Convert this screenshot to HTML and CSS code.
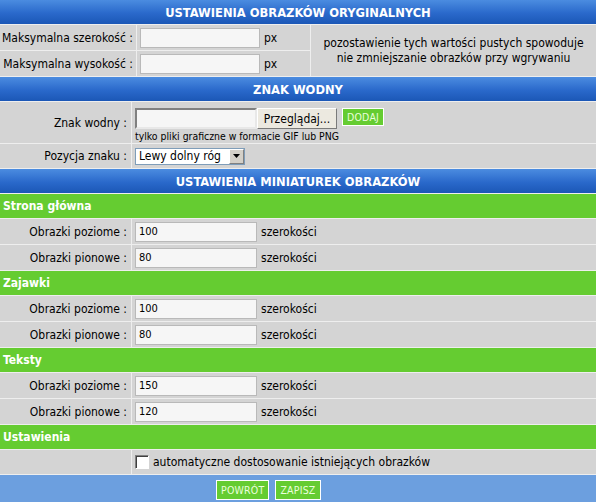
FILE: index.html
```html
<!DOCTYPE html>
<html lang="pl">
<head>
<meta charset="utf-8">
<title>Ustawienia obrazków</title>
<link rel="stylesheet" href="styles.css">
</head>
<body>
<div class="panel">
  <div class="head">USTAWIENIA OBRAZKÓW ORYGINALNYCH</div>
  <div class="orig">
    <div class="lbl">Maksymalna szerokość :</div>
    <div class="fld"><span class="txt"></span><span class="unit">px</span></div>
    <div class="note">pozostawienie tych wartości pustych spowoduje<br>nie zmniejszanie obrazków przy wgrywaniu</div>
    <div class="lbl">Maksymalna wysokość :</div>
    <div class="fld"><span class="txt"></span><span class="unit">px</span></div>
  </div>

  <div class="head">ZNAK WODNY</div>
  <div class="grid wm">
    <div class="lbl">Znak wodny :</div>
    <div class="fld col">
      <div class="filebox">
        <span class="file"></span><span class="browse">Przeglądaj...</span><span class="gbtn add">DODAJ</span>
      </div>
      <div class="hint">tylko pliki graficzne w formacie GIF lub PNG</div>
    </div>
    <div class="lbl">Pozycja znaku :</div>
    <div class="fld">
      <span class="select"><span class="sel-val">Lewy dolny róg</span><span class="sel-arrow"><svg width="7" height="4" viewBox="0 0 7 4"><path d="M0 0h7L3.5 4z" fill="#000"/></svg></span></span>
    </div>
  </div>

  <div class="head">USTAWIENIA MINIATUREK OBRAZKÓW</div>
  <div class="group">Strona główna</div>
  <div class="grid">
    <div class="lbl">Obrazki poziome :</div>
    <div class="fld"><span class="txt wide">100</span><span class="unit">szerokości</span></div>
    <div class="lbl">Obrazki pionowe :</div>
    <div class="fld"><span class="txt wide">80</span><span class="unit">szerokości</span></div>
  </div>
  <div class="group">Zajawki</div>
  <div class="grid">
    <div class="lbl">Obrazki poziome :</div>
    <div class="fld"><span class="txt wide">100</span><span class="unit">szerokości</span></div>
    <div class="lbl">Obrazki pionowe :</div>
    <div class="fld"><span class="txt wide">80</span><span class="unit">szerokości</span></div>
  </div>
  <div class="group">Teksty</div>
  <div class="grid">
    <div class="lbl">Obrazki poziome :</div>
    <div class="fld"><span class="txt wide">150</span><span class="unit">szerokości</span></div>
    <div class="lbl">Obrazki pionowe :</div>
    <div class="fld"><span class="txt wide">120</span><span class="unit">szerokości</span></div>
  </div>
  <div class="group">Ustawienia</div>
  <div class="grid last">
    <div class="lbl"></div>
    <div class="fld"><span class="check"></span><span class="chk-text">automatyczne dostosowanie istniejących obrazków</span></div>
  </div>
  <div class="foot">
    <span class="gbtn">POWRÓT</span><span class="gbtn">ZAPISZ</span>
  </div>
</div>
</body>
</html>
```

FILE: styles.css
```css
html, body {
  margin: 0;
  padding: 0;
  background: #ffffff;
}
body {
  font-family: "DejaVu Sans Condensed", "DejaVu Sans", sans-serif;
  font-size: 12px;
  color: #000;
}
.panel {
  width: 596px;
  display: flex;
  flex-direction: column;
  gap: 1px;
  background: #eeeeee;
}
.head {
  height: 24px;
  line-height: 25px;
  text-align: center;
  color: #fff;
  font-weight: bold;
  font-size: 12.8px;
  background: linear-gradient(#4b8ce0, #2a69cb 55%, #1b57b6);
}
.group {
  height: 24px;
  line-height: 24px;
  padding-left: 3px;
  color: #fff;
  font-weight: bold;
  font-size: 12px;
  background: #65cc31;
}
.orig {
  display: grid;
  grid-template-columns: 136px 173px 1fr;
  grid-template-rows: 25px 25px;
  gap: 1px;
}
.orig .note {
  grid-column: 3;
  grid-row: 1 / span 2;
  background: #d4d4d4;
  display: flex;
  align-items: center;
  justify-content: center;
  text-align: center;
  line-height: 15px;
}
.grid {
  display: grid;
  grid-template-columns: 131px 1fr;
  grid-auto-rows: 25px;
  gap: 1px;
}
.grid.wm { grid-template-rows: 41px 24px; }
.grid.last { grid-auto-rows: 24px; }
.lbl {
  background: #d4d4d4;
  display: flex;
  align-items: center;
  justify-content: flex-end;
  padding-right: 4px;
}
.orig .lbl { padding-right: 3px; }
.fld {
  background: #d4d4d4;
  display: flex;
  align-items: center;
  padding-left: 3px;
}
.fld.col {
  flex-direction: column;
  align-items: flex-start;
  justify-content: flex-start;
  padding-top: 6px;
  box-sizing: border-box;
}
.txt {
  display: inline-block;
  box-sizing: border-box;
  width: 120px;
  height: 20px;
  border: 1px solid #b9b9b9;
  background: #f6f6f6;
  line-height: 18px;
  padding-left: 3px;
  font-size: 11px;
}
.txt.wide { width: 122px; }
.unit { margin-left: 4px; }
.filebox {
  display: flex;
  align-items: flex-start;
  height: 21px;
}
.file {
  box-sizing: border-box;
  width: 122px;
  height: 21px;
  border: 2px solid;
  border-color: #808080 #e8e8e8 #e8e8e8 #808080;
  background: #f6f6f6;
}
.browse {
  box-sizing: border-box;
  height: 21px;
  width: 80px;
  border: 1px solid;
  border-color: #fff #7a7a7a #7a7a7a #fff;
  background: #ece9e0;
  display: flex;
  align-items: center;
  justify-content: center;
}
.gbtn {
  display: inline-flex;
  align-items: center;
  justify-content: center;
  box-sizing: border-box;
  height: 19px;
  padding: 0 4px;
  border: 1px solid #fff;
  background: #65cc31;
  color: #eaffdc;
  font-size: 10.5px;
  letter-spacing: 0.2px;
}
.gbtn.add {
  margin-left: 5px;
  height: 18px;
  width: 42px;
}
.hint {
  font-size: 10.4px;
  margin-top: 1px;
  line-height: 12px;
}
.select {
  box-sizing: border-box;
  width: 110px;
  height: 17px;
  border: 1px solid #7f9db9;
  background: #fff;
  display: flex;
  align-items: center;
  justify-content: space-between;
}
.sel-val { padding-left: 3px; }
.sel-arrow {
  box-sizing: border-box;
  width: 15px;
  height: 15px;
  border: 1px solid;
  border-color: #fff #808080 #808080 #fff;
  background: #d4d0c8;
  display: flex;
  align-items: center;
  justify-content: center;
}
.check {
  box-sizing: border-box;
  width: 14px;
  height: 14px;
  border: 1px solid;
  border-color: #808080 #fff #fff #808080;
  background: #fff;
  box-shadow: inset 1px 1px 0 #404040;
}
.chk-text { margin-left: 4px; }
.foot {
  height: 30px;
  background: #6c9fdf;
  display: flex;
  justify-content: flex-start;
  align-items: flex-start;
  padding: 5px 0 0 216px;
  box-sizing: border-box;
  gap: 6px;
}
.foot .gbtn { height: 20px; }
```
